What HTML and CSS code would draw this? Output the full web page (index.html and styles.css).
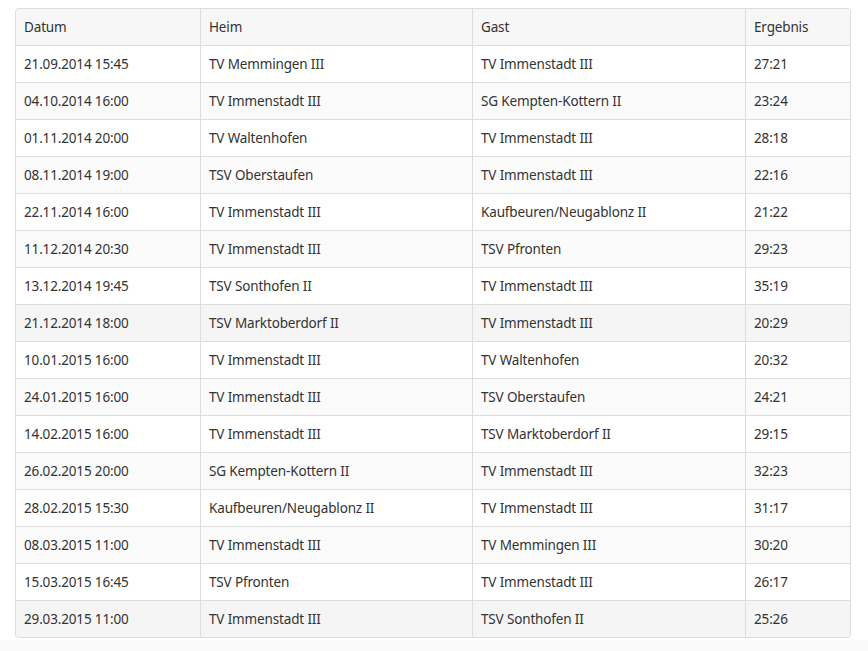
FILE: index.html
```html
<!DOCTYPE html>
<html lang="de">
<head>
  <meta charset="UTF-8">
  <title>Spielplan</title>
  <link rel="stylesheet" href="styles.css">
</head>
<body>
  <div class="page">
    <table class="games">
      <colgroup>
        <col class="col-date">
        <col class="col-home">
        <col class="col-guest">
        <col class="col-result">
      </colgroup>
      <thead>
        <tr><th>Datum</th><th>Heim</th><th>Gast</th><th>Ergebnis</th></tr>
      </thead>
      <tbody>
        <tr><td>21.09.2014 15:45</td><td>TV Memmingen III</td><td>TV Immenstadt III</td><td>27:21</td></tr>
        <tr><td>04.10.2014 16:00</td><td>TV Immenstadt III</td><td>SG Kempten-Kottern II</td><td>23:24</td></tr>
        <tr><td>01.11.2014 20:00</td><td>TV Waltenhofen</td><td>TV Immenstadt III</td><td>28:18</td></tr>
        <tr><td>08.11.2014 19:00</td><td>TSV Oberstaufen</td><td>TV Immenstadt III</td><td>22:16</td></tr>
        <tr><td>22.11.2014 16:00</td><td>TV Immenstadt III</td><td>Kaufbeuren/Neugablonz II</td><td>21:22</td></tr>
        <tr><td>11.12.2014 20:30</td><td>TV Immenstadt III</td><td>TSV Pfronten</td><td>29:23</td></tr>
        <tr><td>13.12.2014 19:45</td><td>TSV Sonthofen II</td><td>TV Immenstadt III</td><td>35:19</td></tr>
        <tr class="marked"><td>21.12.2014 18:00</td><td>TSV Marktoberdorf II</td><td>TV Immenstadt III</td><td>20:29</td></tr>
        <tr><td>10.01.2015 16:00</td><td>TV Immenstadt III</td><td>TV Waltenhofen</td><td>20:32</td></tr>
        <tr><td>24.01.2015 16:00</td><td>TV Immenstadt III</td><td>TSV Oberstaufen</td><td>24:21</td></tr>
        <tr><td>14.02.2015 16:00</td><td>TV Immenstadt III</td><td>TSV Marktoberdorf II</td><td>29:15</td></tr>
        <tr><td>26.02.2015 20:00</td><td>SG Kempten-Kottern II</td><td>TV Immenstadt III</td><td>32:23</td></tr>
        <tr><td>28.02.2015 15:30</td><td>Kaufbeuren/Neugablonz II</td><td>TV Immenstadt III</td><td>31:17</td></tr>
        <tr><td>08.03.2015 11:00</td><td>TV Immenstadt III</td><td>TV Memmingen III</td><td>30:20</td></tr>
        <tr><td>15.03.2015 16:45</td><td>TSV Pfronten</td><td>TV Immenstadt III</td><td>26:17</td></tr>
        <tr class="marked"><td>29.03.2015 11:00</td><td>TV Immenstadt III</td><td>TSV Sonthofen II</td><td>25:26</td></tr>
      </tbody>
    </table>
  </div>
  <div class="footer-strip"></div>
</body>
</html>
```

FILE: styles.css
```css
/* Page */
body {
  margin: 0;
  background-color: #fff;
  font-family: "Noto Sans", "Open Sans", sans-serif;
  font-size: 13.5px;
  letter-spacing: -0.15px;
  line-height: 20px;
  color: #333;
}
.page {
  padding: 8px 17px 0 15px;
}
.footer-strip {
  height: 14px;
  margin-top: 2px;
  background-color: #f9f9f9;
}

/* Table */
.games {
  width: 836px;
  border-collapse: separate;
  border-spacing: 0;
  table-layout: fixed;
  border: 1px solid #ddd;
  border-left: 0;
  border-radius: 4px;
}
.col-date { width: 185px; }
.col-home { width: 272px; }
.col-guest { width: 273px; }
.col-result { width: 105px; }

.games th,
.games td {
  padding: 8px;
  height: 20px;
  text-align: left;
  font-weight: normal;
  border-top: 1px solid #ddd;
  border-left: 1px solid #ddd;
  white-space: nowrap;
}
.games thead th {
  border-top: 0;
  background-color: #f7f7f7;
}
.games tbody tr:nth-child(even) td {
  background-color: #fbfbfb;
}
.games tbody tr.marked td {
  background-color: #f5f5f5;
}

/* Rounded corners */
.games thead th:first-child { border-top-left-radius: 4px; }
.games thead th:last-child { border-top-right-radius: 4px; }
.games tbody tr:last-child td:first-child { border-bottom-left-radius: 4px; }
.games tbody tr:last-child td:last-child { border-bottom-right-radius: 4px; }
```
